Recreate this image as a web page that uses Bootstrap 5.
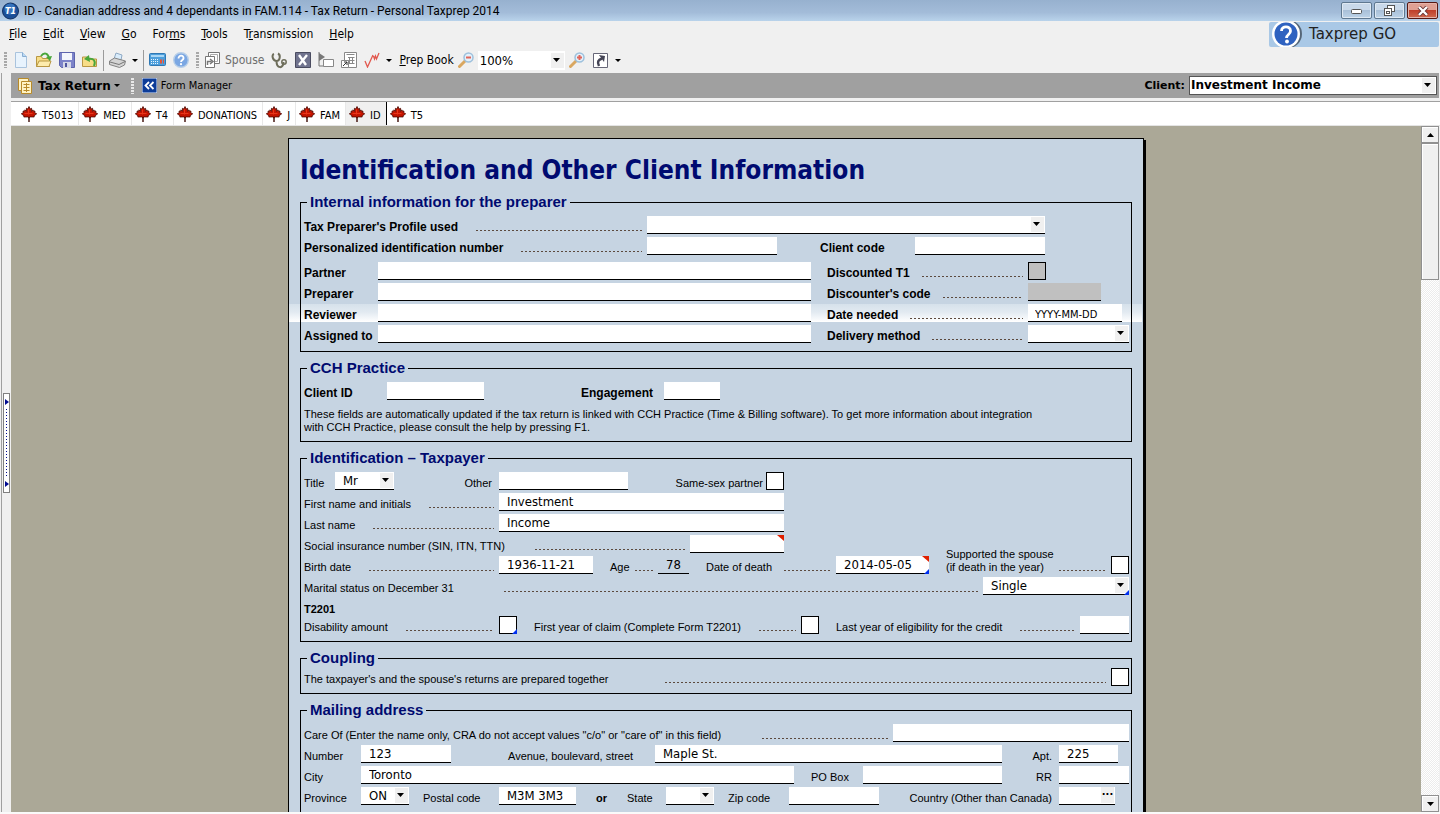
<!DOCTYPE html>
<html lang="en">
<head>
<meta charset="utf-8">
<meta name="viewport" content="width=device-width, initial-scale=1">
<title>ID - Canadian address and 4 dependants in FAM.114 - Tax Return - Personal Taxprep 2014</title>
<link href="https://cdn.jsdelivr.net/npm/bootstrap@5.3.0/dist/css/bootstrap.min.css" rel="stylesheet">
<style>
  :root {
    --ui: "DejaVu Sans Condensed", "DejaVu Sans", sans-serif;
    --wide: "DejaVu Sans", sans-serif;
    --form: "Liberation Sans", Arial, sans-serif;
    --face: #f0f0f0;
    --paper: #c6d4e2;
    --navy: #000a70;
  }
  body { font-family: var(--ui); font-size: 12px; line-height: 16px; color: #000; background: var(--face); }
  button { border: 0; background: none; padding: 0; color: inherit; font: inherit; white-space: nowrap; }
  svg { display: block; flex: none; }

  /* Window frame */
  .title-bar { flex: none; height: 21px; background: linear-gradient(#97b1cf, #a3bcd9 60%, #b9d3eb); font-family: Roboto, "Open Sans", sans-serif; padding: 0 2px; }
  .win-set { gap: 2px; }
  .win-btn { width: 31px; height: 17px; border: 1px solid #5f7890; border-radius: 2px; background: linear-gradient(#c9d9ea 45%, #a9c0d8 50%, #bdd3e8); box-shadow: inset 0 0 0 1px #dfe9f3; }
  .win-btn.close-win { border-color: #571812; background: linear-gradient(#dfa093 45%, #bf3f2a 50%, #cf6a50); box-shadow: inset 0 0 0 1px #e5b4aa; }
  .menu-row { flex: none; height: 26px; padding-left: 9px; gap: 16px; }
  .menu-row a { color: #000; text-decoration: none; line-height: 27px; }
  .go-badge { width: 170px; height: 25px; background: #a9c8e6; border-radius: 2px; font: 15px/25px var(--wide); color: #222; gap: 7px; right: 1px; top: 22px; overflow: hidden; padding-left: 2px; }

  /* Toolbar */
  .tool-row { flex: none; height: 26px; padding-left: 2px; }
  .tool-row > * { flex: none; }
  .tool { width: 23px; height: 22px; display: inline-flex; align-items: center; justify-content: center; }
  .drop { width: 12px; height: 22px; display: inline-flex; align-items: center; justify-content: center; }
  .drop::after { content: ""; border: 3px solid transparent; border-top-color: #000; border-bottom: 0; }
  .grip { flex: none; width: 3px; height: 16px; margin: 0 2px; background: repeating-linear-gradient(#a8a8a8 0 2px, transparent 2px 3px); }
  .grip.on-dark { background: repeating-linear-gradient(#e8e8e8 0 2px, transparent 2px 3px); }
  .rule { width: 1px; height: 21px; background: #9b9b9b; margin: 0 2px; }
  .muted-tool { color: #6d6d6d; }
  .cell.zoom-box { width: 87px; height: 19px; border: 0; font-size: 13px; padding: 0 2px; }

  /* Client bar */
  .side-rail { width: 10px; margin-left: 1px; border-left: 1px solid #a0a0a0; }
  .client-bar { flex: none; height: 25px; background: #a0a0a0; padding: 0 2px 0 7px; margin-right: 1px; }
  .client-bar > * { flex: none; }
  .client-bar strong { font: bold 12px/16px var(--wide); }
  .client-bar label { font: bold 11px/16px var(--wide); }
  .manager-btn { font-size: 11px; }
  .cell.client-pick { width: 248px; height: 19px; font: bold 12px/15px var(--wide); border: 1px solid #555; padding: 0 1px; }
  .tab-row { flex: none; height: 25px; margin-top: 3px; border-top: 1px solid #a0a0a0; border-bottom: 1px solid #e4e4e4; background: #fff; padding-left: 7px; font-size: 11px; }
  .tab-row a { color: #000; text-decoration: none; padding: 0 5px 0 3px; gap: 5px; line-height: 21px; border-right: 1px solid #e8e8e8; }
  .tab-row a span { padding-top: 4px; }
  .tab-row a.current { background: var(--face); border-right-color: #000; }
  .tab-row a:last-child { border-right: 0; }

  /* Desk and scroll bar */
  .fill { min-height: 0; }
  .desk { background: #aba897; overflow: hidden; padding-top: 12px; }
  .scroll-col { width: 18px; margin-right: 1px; background: repeating-conic-gradient(#fff 0 25%, #ececec 0 50%) 0 0 / 2px 2px; }
  .scroll-col button, .thumb { border: 1px solid #909090; background: var(--face); box-shadow: inset 1px 1px 0 #fff; }
  .scroll-col button { height: 17px; display: flex; align-items: center; justify-content: center; }
  .thumb { height: 20%; }
  .splitter { width: 7px; height: 100px; border: 1px solid #808080; background: #fff; left: 3px; top: 393px; padding: 5px 0; }
  .splitter i { width: 1px; flex: 1; margin: 4px 0; background: repeating-linear-gradient(#000a90 0 1px, transparent 1px 3px); }
  .base-edge { height: 2px; background: #fafafa; }

  /* Form sheet */
  .sheet { width: 100%; max-width: 856px; min-height: 900px; margin: 0 auto; padding: 15px 11px; background: var(--paper); border: 1px solid #000; box-shadow: 2px 2px 0 #000; isolation: isolate; font: 11px/14px var(--form); }
  .sheet h1 { font: bold 26px/32px var(--ui); color: var(--navy); margin: 0 0 7px; }
  .sheet fieldset { border: 1px solid #000; padding: 5px 2px 7px 3px; margin: 0 0 7px; }
  .sheet fieldset.roomy { padding-bottom: 8px; }
  .sheet legend { float: none; width: auto; font: bold 15px/18px var(--form); color: var(--navy); margin: 0 0 0 3px; padding: 0 3px; }
  .sheet fieldset.tight { padding-top: 1px; }
  .sheet fieldset.open-end { padding-bottom: 24px; }
  .stack { display: grid; gap: 3px; }
  .line { display: grid; align-items: end; min-height: 18px; position: relative; }
  .strong-set { font-weight: bold; font-size: 12px; }
  .leader { display: flex; align-items: flex-end; gap: 18px; white-space: nowrap; }
  .leader::after { content: ""; flex: 1; height: 1px; margin: 0 5px 3px 0; background: repeating-linear-gradient(90deg, #5c4a3e 0 2px, transparent 2px 4px); }
  .leader.near { gap: 12px; }
  .leader.snug { gap: 5px; }
  .cell { display: block; width: 100%; height: 18px; border: 0; border-bottom: 1px solid #000; border-radius: 0; background-color: #fff; padding: 0 8px; font: 13px/17px var(--ui); color: #000; min-width: 0; }
  .cell::placeholder { color: #000; font-size: 11px; opacity: 1; }
  .cell.hint { padding: 2px 7px 0; }
  .cell:disabled { background: #c0c0c0; opacity: 1; }
  .cell.calc { background: none; }
  .pick { appearance: none; background-repeat: no-repeat; background-position: right 1px center; background-image: url("data:image/svg+xml,%3Csvg xmlns='http://www.w3.org/2000/svg' width='13' height='15'%3E%3Cpath fill='%23f0f0f0' d='M0 0h13v15H0z'/%3E%3Cpath d='M2 5h7L5.500 9z'/%3E%3C/svg%3E"); }
  .tick { appearance: none; display: block; width: 18px; height: 18px; margin: 0; border: 1px solid #000; background: #fff; border-radius: 0; }
  .tick:disabled { background: #c0c0c0; }
  .flag { position: relative; }
  .flag.warn::before, .flag.note::after { content: ""; position: absolute; right: 0; }
  .flag.warn::before { top: 0; border-top: 6px solid #e02000; border-left: 7px solid transparent; }
  .flag.note::after { bottom: 0; border-bottom: 5px solid #0030f0; border-left: 5px solid transparent; }
  .active-line::before { content: ""; position: absolute; z-index: -1; left: -15px; right: -13px; top: 0; bottom: 0; background: linear-gradient(#d6e1eb, #e2eaf1 45%, #fff); }

  .c-profile { grid-template-columns: 1fr 398px 84px; }
  .c-pin { grid-template-columns: 1fr 130px 138px 130px 84px; }
  .c-staff { grid-template-columns: 74px 1fr 217px 101px; }
  .c-cch { grid-template-columns: 83px 97px 180px 56px 1fr; }
  .c-title { grid-template-columns: 31px 59px 105px 129px 138px 18px 1fr; }
  .c-name { grid-template-columns: 195px 285px 1fr; }
  .c-sin { grid-template-columns: 386px 94px 1fr; }
  .c-birth { grid-template-columns: 195px 94px 65px 31px 147px 93px 1fr 18px; }
  .c-status { grid-template-columns: 1fr 146px; }
  .c-credit { grid-template-columns: 195px 18px 284px 18px 1fr 49px; }
  .c-couple { grid-template-columns: 1fr 18px; }
  .c-care { grid-template-columns: 1fr 236px; }
  .c-street { grid-template-columns: 57px 90px 204px 1fr 57px 59px 11px; }
  .c-city { grid-template-columns: 57px 1fr 69px 139px 57px 70px; }
  .c-prov { grid-template-columns: 57px 48px 90px 77px 90px 48px 75px 90px 1fr 56px 14px; }
  .in-14 { padding-left: 14px; }
  .in-17 { padding-left: 17px; }
  .in-20 { padding-left: 20px; }
  .in-43 { padding-left: 43px; }
  .in-57 { padding-left: 57px; }
  .in-97 { padding-left: 97px; }
  .to-field { text-align: right; padding-right: 7px; white-space: nowrap; }
  .to-box { text-align: right; padding-right: 3px; white-space: nowrap; }
  .w-73 { width: 73px; }
  .w-94 { width: 94px; }
  .lab-sin { min-width: 213px; }
  .lab-status { min-width: 182px; }
  .lab-couple { min-width: 343px; }
  .lab-care { min-width: 440px; }
  .two-line { line-height: 13px; margin-top: -8px; }
  .fine-text { line-height: 13px; }
  .more-btn { width: 13px; height: 16px; background: var(--face); font: bold 11px/14px var(--ui); right: 1px; top: 0; }
</style>
</head>
<body class="vh-100 d-flex flex-column overflow-hidden position-relative">

<svg width="0" height="0" class="position-absolute" aria-hidden="true">
  <symbol id="leaf" viewBox="0 0 16 16">
    <path d="M7.300 11v5h1.400v-5z" fill="#3a0600"/>
    <path d="M8 .5 9.200 3 10.600 2.300 10.400 5.400 12 3.800 12.400 5.200 14 5 13.600 6.600 15.700 7.800 13 9.800 13.200 11 8.600 10.900 8 12.200 7.400 10.900 2.800 11 3 9.800.3 7.800 2.400 6.600 2 5 3.600 5.200 4 3.800 5.600 5.400 5.400 2.300 6.800 3z" fill="#c41400" stroke="#4a0800" stroke-width=".8"/>
    <path d="M3.500 7.500h8M7.500 3.500v5" stroke="#e8361a"/>
  </symbol>
  <symbol id="lens" viewBox="0 0 16 16">
    <path d="M1.500 14.500 7 9" stroke="#d9a760" stroke-width="3" stroke-linecap="round"/>
    <circle cx="10.500" cy="5.500" r="4.500" fill="#e4f1fb" stroke="#9dc0dc" stroke-width="1.500"/>
  </symbol>
</svg>

<header class="title-bar d-flex align-items-center">
  <svg width="18" height="18" viewBox="0 0 18 18" class="me-1"><circle cx="8.500" cy="9" r="8" fill="#1b4f97" stroke="#123060"/><circle cx="8" cy="7" r="5.500" fill="#3673bd"/><text x="3" y="12" font-family="DejaVu Sans" font-size="8" font-weight="bold" font-style="italic" fill="#fff">T1</text></svg>
  <span class="flex-grow-1 text-nowrap">ID - Canadian address and 4 dependants in FAM.114 - Tax Return - Personal Taxprep 2014</span>
  <div class="win-set d-flex">
    <button class="win-btn d-flex align-items-center justify-content-center" aria-label="Minimize"><svg width="12" height="6"><rect x=".5" y="1.500" width="10" height="4" rx="1" fill="#fff" stroke="#555"/></svg></button>
    <button class="win-btn d-flex align-items-center justify-content-center" aria-label="Restore"><svg width="13" height="12" fill="#fff" stroke="#555"><rect x="4.500" y=".5" width="7" height="6"/><rect x="1.500" y="3.500" width="7" height="7"/><rect x="3.500" y="6.500" width="3" height="2"/></svg></button>
    <button class="win-btn close-win d-flex align-items-center justify-content-center" aria-label="Close"><svg width="12" height="10" viewBox="0 0 12 10"><path d="M2 1 10 9M10 1 2 9" stroke="#633" stroke-width="4"/><path d="M2 1 10 9M10 1 2 9" stroke="#fff" stroke-width="2.400"/></svg></button>
  </div>
</header>

<nav class="menu-row d-flex">
  <a href="#"><u>F</u>ile</a><a href="#"><u>E</u>dit</a><a href="#"><u>V</u>iew</a><a href="#"><u>G</u>o</a><a href="#">For<u>m</u>s</a><a href="#"><u>T</u>ools</a><a href="#">T<u>r</u>ansmission</a><a href="#"><u>H</u>elp</a>
</nav>
<button class="go-badge position-absolute d-flex align-items-center"><svg width="31" height="25" viewBox="0 0 31 25"><circle cx="17" cy="12" r="14" fill="#567"/><circle cx="15" cy="12" r="14" fill="#fff"/><circle cx="15" cy="12" r="11.500" fill="#2f62c0"/><path d="M10.500 9c0-5.500 9-5.500 9 0 0 3.500-4 3.500-4 7" fill="none" stroke="#fff" stroke-width="2.800"/><circle cx="16" cy="19.500" r="1.900" fill="#fff"/></svg>Taxprep GO</button>

<div class="tool-row d-flex align-items-center">
  <span class="grip"></span>
  <button class="tool" aria-label="New"><svg width="16" height="16"><path d="M2.500.5h7l4 4v11h-11z" fill="#e8f3fd" stroke="#a9c3dd"/><path d="M9.500.5v4h4" fill="#bcd9f4" stroke="#88aed2"/></svg></button>
  <button class="tool" aria-label="Open"><svg width="18" height="16"><path d="M1.500 14.500v-10h5l1 2h7v8z" fill="#f7dd87" stroke="#b99743"/><path d="M1.500 14.500 4 9h12l-2 5.500z" fill="#fdecad" stroke="#b99743"/><path d="M6 4c3-4 7-3 8 2" fill="none" stroke="#49a63a" stroke-width="2"/><path d="m11 5 6-1-2 5z" fill="#49a63a"/></svg></button>
  <button class="tool" aria-label="Save"><svg width="16" height="16"><path d="M.5.5h15v15h-13l-2-2z" fill="#7c83c9" stroke="#5d64ad"/><path d="M3 1h10v7H3z" fill="#f3f5fb"/><path d="M4 10h8v6H4z" fill="#d5d8e8"/><path d="M6 11h2v4H6z" fill="#4e55a0"/></svg></button>
  <button class="tool" aria-label="Close return"><svg width="16" height="16"><path d="M.5 14.500V5h5l1 2h8v7.500z" fill="#f7dd87" stroke="#b99743"/><path d="M12 14c2-5 0-8-6-7" fill="none" stroke="#49a63a" stroke-width="2"/><path d="m7 3-5 4 6 3z" fill="#49a63a"/></svg></button>
  <span class="rule"></span>
  <button class="tool" aria-label="Print"><svg width="17" height="16"><path d="m5 7 2-6 6 2-1 5z" fill="#d9ecfb" stroke="#8ea9c4"/><path d="m.5 9 5-3 11 3-1 4-5 2.500-10-3z" fill="#d4d4d4" stroke="#838383"/><path d="m1 10 9 2.500 6-3" fill="none" stroke="#777"/></svg></button>
  <button class="drop" aria-label="Print options"></button>
  <span class="rule"></span>
  <button class="tool" aria-label="Calculator"><svg width="17" height="14"><rect x=".5" y=".5" width="16" height="12" rx="1" fill="#4d9fdc" stroke="#2f78b4"/><path d="M2 2h13v2H2z" fill="#a8d6f5"/><path d="M2 6.500h8M2 8.500h8M2 10.500h8" stroke="#e8f5fd" stroke-dasharray="1 1"/><path d="M11 8.500h4" stroke="#e5553b" stroke-width="4" stroke-dasharray="2 1"/></svg></button>
  <button class="tool" aria-label="Help"><svg width="16" height="16"><circle cx="8" cy="8" r="7.300" fill="#7ba7e3" stroke="#b8cfe8" stroke-width="1.400"/><path d="M5.500 6.500c0-4 5.500-3.500 5 0-.2 1.500-2.500 1.500-2.500 3.500" fill="none" stroke="#fff" stroke-width="1.800"/><circle cx="8" cy="12.200" r="1.100" fill="#fff"/></svg></button>
  <span class="grip ms-1"></span>
  <button class="muted-tool d-flex align-items-center gap-1 ms-1"><svg width="16" height="16" fill="#fff" stroke="#777"><path d="M3.500.5h11v11h-11z"/><path d="M5.500 2.500h7v7h-7z" stroke="#aaa"/><path d="M.5 4.500h9v11h-9z"/><path d="M2.500 13V9.500h4M5 7l3 2.500L5 12" fill="none" stroke-width="1.500"/></svg>Spouse</button>
  <button class="tool ms-1" aria-label="Diagnostics"><svg width="17" height="17" fill="none" stroke="#6d6d5a" stroke-width="2"><path d="M3 2C0 3 2 9 5.500 9S10 3 7 1.500M5.500 9c0 8 7 8 7 1"/><circle cx="13" cy="10" r="2.200" stroke-width="1.500"/></svg></button>
  <button class="tool" aria-label="Excel"><svg width="16" height="16"><path d="M.5.5h15v15H.5z" fill="#70738e" stroke="#4a4c60"/><path d="m4 3 7 10M12 3 4 13" stroke="#fff" stroke-width="2.400"/></svg></button>
  <button class="tool" aria-label="Go to field"><svg width="16" height="16"><path d="M1 0v14M1 14h6" stroke="#777" fill="none"/><path d="M1 1v8l6-4z" fill="#777"/><path d="M5.500 7.500h10v7h-10z" fill="#fff" stroke="#888"/></svg></button>
  <button class="tool" aria-label="Related form"><svg width="16" height="16" fill="#fff" stroke="#888"><path d="M3.500.5h12v15h-12z"/><path d="M5.500 2.500h8M7 5.500h6.500M7 8.500h6.500M8 11.500h5.500M8.500 5v6M11.500 5v7"/><path d="M.5 8.500h7v7h-7z"/><path d="m2 14 4-4M3 10h3v3" stroke="#333"/></svg></button>
  <button class="tool" aria-label="Review marks"><svg width="16" height="16" fill="none" stroke="#e2584e" stroke-width="1.300"><path d="m1 9 2.500 6L9 3M9.500 4l1 3 1-3 1 3L15 1"/></svg></button>
  <button class="drop" aria-label="Review options"></button>
  <button class="ms-1 me-1"><u>P</u>rep Book</button>
  <button aria-label="Zoom out"><svg width="16" height="16"><use href="#lens"/><path d="M8 5.500h5" stroke="#e0655a" stroke-width="2"/></svg></button>
  <select class="zoom-box cell pick mx-1" aria-label="Zoom"><option>100%</option></select>
  <button aria-label="Zoom in"><svg width="16" height="16"><use href="#lens"/><path d="M8 5.500h5M10.500 3v5" stroke="#e0655a" stroke-width="2"/></svg></button>
  <button class="tool ms-1" aria-label="Jump"><svg width="15" height="15"><path d="M.5.5h14v14H.5z" fill="#fff" stroke="#667"/><path d="M6 13c-2-4-1-6 3-7.500" fill="none" stroke="#445" stroke-width="2.500"/><path d="m6 2 6 1-1 6z" fill="#445"/></svg></button>
  <button class="drop" aria-label="Jump options"></button>
</div>

<div class="fill d-flex flex-grow-1 overflow-hidden">
  <div class="side-rail flex-shrink-0"></div>
  <div class="d-flex flex-column flex-grow-1">
    <div class="client-bar d-flex align-items-center">
      <svg width="16" height="16" class="me-1" fill="#fff3c4" stroke="#b88a2a"><path d="M.5.5h10v12H.5z"/><path d="M3.500 3.500h10v12h-10z"/><path d="M5.500 6.500h6M5.500 9.500h6M5.500 12.500h6M8.500 5v9"/></svg>
      <button><strong>Tax Return</strong></button>
      <button class="drop" aria-label="Return options"></button>
      <span class="grip on-dark mx-2"></span>
      <button class="manager-btn d-flex align-items-center gap-1"><svg width="15" height="15"><rect width="15" height="15" rx="1" fill="#0c3c98" stroke="#dfe8f8"/><path d="M7 4 3.500 7.500 7 11M11.500 4 8 7.500l3.500 3.500" fill="none" stroke="#fff" stroke-width="1.800"/></svg>Form Manager</button>
      <label class="ms-auto me-1" for="client">Client:</label>
      <select id="client" class="cell pick client-pick"><option>Investment Income</option></select>
    </div>
    <nav class="tab-row d-flex">
      <a href="#" class="d-flex align-items-center"><svg width="16" height="16"><use href="#leaf"/></svg><span>T5013</span></a>
      <a href="#" class="d-flex align-items-center"><svg width="16" height="16"><use href="#leaf"/></svg><span>MED</span></a>
      <a href="#" class="d-flex align-items-center"><svg width="16" height="16"><use href="#leaf"/></svg><span>T4</span></a>
      <a href="#" class="d-flex align-items-center"><svg width="16" height="16"><use href="#leaf"/></svg><span>DONATIONS</span></a>
      <a href="#" class="d-flex align-items-center"><svg width="16" height="16"><use href="#leaf"/></svg><span>J</span></a>
      <a href="#" class="d-flex align-items-center"><svg width="16" height="16"><use href="#leaf"/></svg><span>FAM</span></a>
      <a href="#" class="d-flex align-items-center current"><svg width="16" height="16"><use href="#leaf"/></svg><span>ID</span></a>
      <a href="#" class="d-flex align-items-center"><svg width="16" height="16"><use href="#leaf"/></svg><span>T5</span></a>
    </nav>
    <div class="fill d-flex flex-grow-1 overflow-hidden">
      <main class="desk flex-grow-1">
        <form class="sheet">
          <h1>Identification and Other Client Information</h1>

          <fieldset class="roomy">
            <legend>Internal information for the preparer</legend>
            <div class="stack strong-set">
              <div class="line c-profile">
                <div class="leader"><label for="profile">Tax Preparer's Profile used</label></div>
                <select id="profile" class="cell pick"><option></option></select>
              </div>
              <div class="line c-pin">
                <div class="leader"><label for="pin">Personalized identification number</label></div>
                <input id="pin" class="cell">
                <label for="ccode" class="in-43">Client code</label>
                <input id="ccode" class="cell">
              </div>
              <div class="line c-staff mt-1">
                <label for="partner">Partner</label><input id="partner" class="cell">
                <div class="leader near ps-3"><label for="disc">Discounted T1</label></div>
                <input id="disc" type="checkbox" class="tick" disabled>
              </div>
              <div class="line c-staff">
                <label for="preparer">Preparer</label><input id="preparer" class="cell">
                <div class="leader near ps-3"><label for="dcode">Discounter's code</label></div>
                <input id="dcode" class="cell w-73" disabled>
              </div>
              <div class="line c-staff active-line">
                <label for="reviewer">Reviewer</label><input id="reviewer" class="cell">
                <div class="leader near ps-3"><label for="needed">Date needed</label></div>
                <input id="needed" class="cell hint w-94" placeholder="YYYY-MM-DD">
              </div>
              <div class="line c-staff">
                <label for="assigned">Assigned to</label><input id="assigned" class="cell">
                <div class="leader near ps-3"><label for="delivery">Delivery method</label></div>
                <select id="delivery" class="cell pick"><option></option></select>
              </div>
            </div>
          </fieldset>

          <fieldset>
            <legend>CCH Practice</legend>
            <div class="line c-cch strong-set">
              <label for="clientid">Client ID</label><input id="clientid" class="cell">
              <label for="engage" class="in-97">Engagement</label><input id="engage" class="cell">
            </div>
            <p class="fine-text mt-2 mb-0">These fields are automatically updated if the tax return is linked with CCH Practice (Time &amp; Billing software). To get more information about integration<br>with CCH Practice, please consult the help by pressing F1.</p>
          </fieldset>

          <fieldset>
            <legend>Identification – Taxpayer</legend>
            <div class="stack">
              <div class="line c-title">
                <label for="ttl">Title</label><select id="ttl" class="cell pick"><option>Mr</option></select>
                <label for="other" class="to-field">Other</label><input id="other" class="cell">
                <label for="samesex" class="to-box">Same-sex partner</label><input id="samesex" type="checkbox" class="tick">
              </div>
              <div class="line c-name"><div class="leader"><label for="first">First name and initials</label></div><input id="first" class="cell" value="Investment"></div>
              <div class="line c-name"><div class="leader"><label for="last">Last name</label></div><input id="last" class="cell" value="Income"></div>
              <div class="line c-sin"><div class="leader"><label for="sin" class="lab-sin">Social insurance number (SIN, ITN, TTN)</label></div><span class="flag warn"><input id="sin" class="cell"></span></div>
              <div class="line c-birth">
                <div class="leader"><label for="birth">Birth date</label></div><input id="birth" class="cell" value="1936-11-21">
                <div class="leader snug in-17"><label for="age">Age</label></div><input id="age" class="cell calc" value="78" readonly>
                <div class="leader near in-17"><label for="death">Date of death</label></div><span class="flag warn note"><input id="death" class="cell" value="2014-05-05"></span>
                <div class="leader snug in-17 two-line"><label for="support">Supported the spouse<br>(if death in the year)</label></div><input id="support" type="checkbox" class="tick">
              </div>
              <div class="line c-status"><div class="leader"><label for="status" class="lab-status">Marital status on December 31</label></div><span class="flag note"><select id="status" class="cell pick"><option>Single</option></select></span></div>
              <div>
                <div class="fw-bold pt-1">T2201</div>
                <div class="line c-credit">
                  <div class="leader"><label for="disab">Disability amount</label></div><span class="flag note"><input id="disab" type="checkbox" class="tick"></span>
                  <div class="leader in-17"><label for="claim">First year of claim (Complete Form T2201)</label></div><input id="claim" type="checkbox" class="tick">
                  <div class="leader in-17"><label for="lastyr">Last year of eligibility for the credit</label></div><input id="lastyr" class="cell">
                </div>
              </div>
            </div>
          </fieldset>

          <fieldset class="tight">
            <legend>Coupling</legend>
            <div class="line c-couple"><div class="leader"><label for="couple" class="lab-couple">The taxpayer's and the spouse's returns are prepared together</label></div><input id="couple" type="checkbox" class="tick"></div>
          </fieldset>

          <fieldset class="open-end">
            <legend>Mailing address</legend>
            <div class="stack">
              <div class="line c-care"><div class="leader"><label for="care" class="lab-care">Care Of (Enter the name only, CRA do not accept values "c/o" or "care of" in this field)</label></div><input id="care" class="cell"></div>
              <div class="line c-street">
                <label for="num">Number</label><input id="num" class="cell" value="123">
                <label for="street" class="in-57">Avenue, boulevard, street</label><input id="street" class="cell" value="Maple St.">
                <label for="apt" class="to-field">Apt.</label><input id="apt" class="cell" value="225">
              </div>
              <div class="line c-city">
                <label for="city">City</label><input id="city" class="cell" value="Toronto">
                <label for="pobox" class="in-17">PO Box</label><input id="pobox" class="cell">
                <label for="rr" class="to-field">RR</label><input id="rr" class="cell">
              </div>
              <div class="line c-prov">
                <label for="prov">Province</label><select id="prov" class="cell pick"><option>ON</option></select>
                <label for="postal" class="in-14">Postal code</label><input id="postal" class="cell" value="M3M 3M3">
                <div class="in-20 d-flex gap-3"><b class="me-1">or</b><label for="state">State</label></div><select id="state" class="cell pick"><option></option></select>
                <label for="zip" class="in-14">Zip code</label><input id="zip" class="cell">
                <label for="country" class="to-field">Country (Other than Canada)</label>
                <span class="position-relative"><input id="country" class="cell"><button type="button" class="more-btn position-absolute" aria-label="Choose country">···</button></span>
              </div>
            </div>
          </fieldset>
        </form>
      </main>
      <div class="scroll-col d-flex flex-column flex-shrink-0">
        <button aria-label="Scroll up"><svg width="7" height="4"><path d="M0 4 3.500 0 7 4z"/></svg></button>
        <div class="thumb"></div>
        <button class="mt-auto" aria-label="Scroll down"><svg width="7" height="4"><path d="M0 0h7L3.500 4z"/></svg></button>
      </div>
    </div>
  </div>
</div>
<footer class="base-edge flex-shrink-0"></footer>
<button class="splitter position-absolute d-flex flex-column align-items-center" aria-label="Expand side panel"><svg width="4" height="6"><path d="M0 0v6l4-3z" fill="#000a90"/></svg><i></i><svg width="4" height="6"><path d="M0 0v6l4-3z" fill="#000a90"/></svg></button>

<script src="https://cdn.jsdelivr.net/npm/bootstrap@5.3.0/dist/js/bootstrap.bundle.min.js"></script>
</body>
</html>
